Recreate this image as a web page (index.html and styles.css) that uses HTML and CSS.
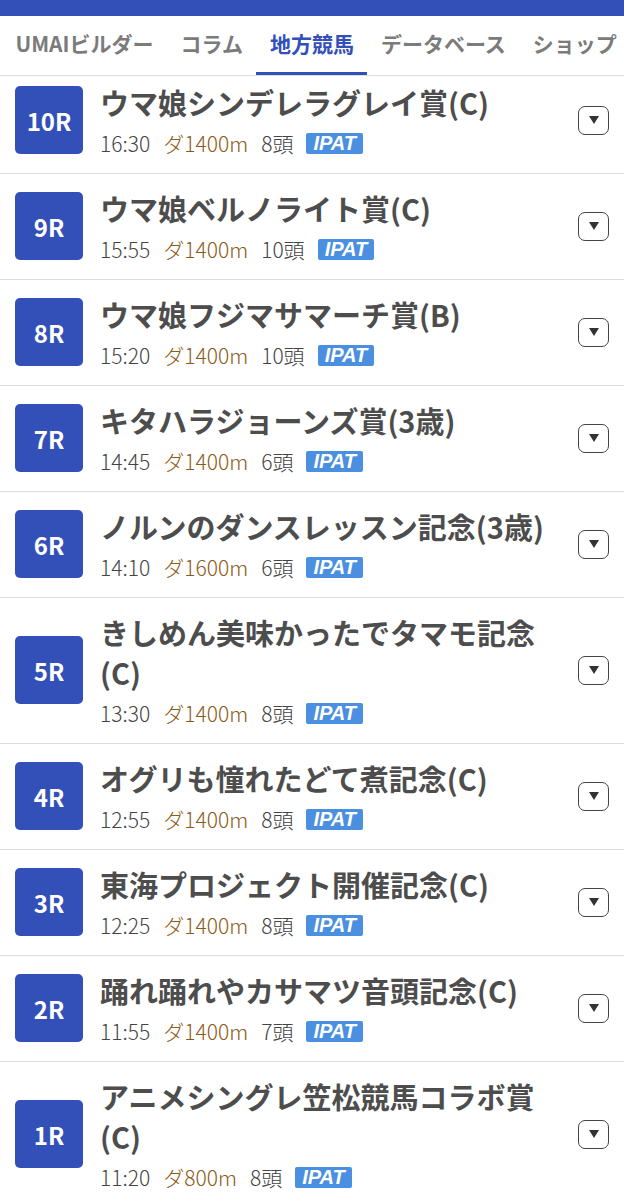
FILE: index.html
```html
<!DOCTYPE html>
<html lang="ja">
  <head>
    <meta charset="UTF-8" />
    <title>地方競馬</title>
    <link rel="stylesheet" href="styles.css">
  </head>
  <body>
    <!-- 上部の帯 -->
    <div class="topbar"></div>

    <!-- タブ -->
    <nav class="tabs">
      <a class="tab">UMAIビルダー</a>
      <a class="tab">コラム</a>
      <a class="tab active">地方競馬</a>
      <a class="tab">データベース</a>
      <a class="tab">ショップ</a>
    </nav>

    <!-- レース一覧（少しスクロールした状態） -->
    <div class="races">
      <ul class="race-list">
        <li class="race">
          <div class="race-no">10R</div>
          <div class="race-body">
            <div class="race-name">ウマ娘シンデレラグレイ賞(C)</div>
            <div class="race-meta"><span>16:30</span><span class="dist">ダ1400m</span><span>8頭</span><span class="ipat">IPAT</span></div>
          </div>
          <button class="toggle"><svg width="10" height="8" viewBox="0 0 10 8"><path d="M0 0h10L5 8z" fill="#333"/></svg></button>
        </li>
        <li class="race">
          <div class="race-no">9R</div>
          <div class="race-body">
            <div class="race-name">ウマ娘ベルノライト賞(C)</div>
            <div class="race-meta"><span>15:55</span><span class="dist">ダ1400m</span><span>10頭</span><span class="ipat">IPAT</span></div>
          </div>
          <button class="toggle"><svg width="10" height="8" viewBox="0 0 10 8"><path d="M0 0h10L5 8z" fill="#333"/></svg></button>
        </li>
        <li class="race">
          <div class="race-no">8R</div>
          <div class="race-body">
            <div class="race-name">ウマ娘フジマサマーチ賞(B)</div>
            <div class="race-meta"><span>15:20</span><span class="dist">ダ1400m</span><span>10頭</span><span class="ipat">IPAT</span></div>
          </div>
          <button class="toggle"><svg width="10" height="8" viewBox="0 0 10 8"><path d="M0 0h10L5 8z" fill="#333"/></svg></button>
        </li>
        <li class="race">
          <div class="race-no">7R</div>
          <div class="race-body">
            <div class="race-name">キタハラジョーンズ賞(3歳)</div>
            <div class="race-meta"><span>14:45</span><span class="dist">ダ1400m</span><span>6頭</span><span class="ipat">IPAT</span></div>
          </div>
          <button class="toggle"><svg width="10" height="8" viewBox="0 0 10 8"><path d="M0 0h10L5 8z" fill="#333"/></svg></button>
        </li>
        <li class="race">
          <div class="race-no">6R</div>
          <div class="race-body">
            <div class="race-name">ノルンのダンスレッスン記念(3歳)</div>
            <div class="race-meta"><span>14:10</span><span class="dist">ダ1600m</span><span>6頭</span><span class="ipat">IPAT</span></div>
          </div>
          <button class="toggle"><svg width="10" height="8" viewBox="0 0 10 8"><path d="M0 0h10L5 8z" fill="#333"/></svg></button>
        </li>
        <li class="race">
          <div class="race-no">5R</div>
          <div class="race-body">
            <div class="race-name">きしめん美味かったでタマモ記念(C)</div>
            <div class="race-meta"><span>13:30</span><span class="dist">ダ1400m</span><span>8頭</span><span class="ipat">IPAT</span></div>
          </div>
          <button class="toggle"><svg width="10" height="8" viewBox="0 0 10 8"><path d="M0 0h10L5 8z" fill="#333"/></svg></button>
        </li>
        <li class="race">
          <div class="race-no">4R</div>
          <div class="race-body">
            <div class="race-name">オグリも憧れたどて煮記念(C)</div>
            <div class="race-meta"><span>12:55</span><span class="dist">ダ1400m</span><span>8頭</span><span class="ipat">IPAT</span></div>
          </div>
          <button class="toggle"><svg width="10" height="8" viewBox="0 0 10 8"><path d="M0 0h10L5 8z" fill="#333"/></svg></button>
        </li>
        <li class="race">
          <div class="race-no">3R</div>
          <div class="race-body">
            <div class="race-name">東海プロジェクト開催記念(C)</div>
            <div class="race-meta"><span>12:25</span><span class="dist">ダ1400m</span><span>8頭</span><span class="ipat">IPAT</span></div>
          </div>
          <button class="toggle"><svg width="10" height="8" viewBox="0 0 10 8"><path d="M0 0h10L5 8z" fill="#333"/></svg></button>
        </li>
        <li class="race">
          <div class="race-no">2R</div>
          <div class="race-body">
            <div class="race-name">踊れ踊れやカサマツ音頭記念(C)</div>
            <div class="race-meta"><span>11:55</span><span class="dist">ダ1400m</span><span>7頭</span><span class="ipat">IPAT</span></div>
          </div>
          <button class="toggle"><svg width="10" height="8" viewBox="0 0 10 8"><path d="M0 0h10L5 8z" fill="#333"/></svg></button>
        </li>
        <li class="race">
          <div class="race-no">1R</div>
          <div class="race-body">
            <div class="race-name">アニメシングレ笠松競馬コラボ賞(C)</div>
            <div class="race-meta"><span>11:20</span><span class="dist">ダ800m</span><span>8頭</span><span class="ipat">IPAT</span></div>
          </div>
          <button class="toggle"><svg width="10" height="8" viewBox="0 0 10 8"><path d="M0 0h10L5 8z" fill="#333"/></svg></button>
        </li>
      </ul>
    </div>
  </body>
</html>
```

FILE: styles.css
```css
body {
  margin: 0;
  background: #fff;
  font-family: "Noto Sans CJK JP", "Noto Sans", sans-serif;
  color: #4d4d4d;
}

/* 上の青い帯 */
.topbar {
  height: 16px;
  background: #3350b8;
}

/* タブ */
.tabs {
  display: flex;
  height: 59px;
  padding-left: 2px;
  border-bottom: 1px solid #dcdcdc;
  white-space: nowrap;
  overflow: hidden;
}
.tab {
  display: flex;
  align-items: center;
  padding: 0 13.5px 3px;
  font-size: 21px;
  font-weight: bold;
  color: #7b7b7b;
  border-bottom: 3px solid transparent;
}
.tab.active {
  color: #3350b8;
  border-bottom-color: #3350b8;
}

/* レース一覧 */
.races {
  overflow: hidden;
}
.race-list {
  list-style: none;
  margin: -8px 0 0;
  padding: 0;
}
.race {
  display: flex;
  align-items: center;
  gap: 17px;
  padding: 14px 15px 15px;
  border-bottom: 1px solid #dcdcdc;
}
.race-no {
  flex: none;
  width: 68px;
  height: 68px;
  border-radius: 5px;
  background: #3350b8;
  color: #fff;
  font-size: 24px;
  font-weight: bold;
  display: flex;
  align-items: center;
  justify-content: center;
}
.race-body {
  flex: 1;
  min-width: 0;
}
.race-name {
  font-size: 29px;
  line-height: 40px;
  font-weight: bold;
  color: #4d4d4d;
}
.race-meta {
  display: flex;
  align-items: center;
  gap: 13px;
  margin-top: 6px;
  height: 30px;
  font-size: 21px;
  font-weight: 300;
  color: #444;
}
.dist {
  color: #8b5a16;
}
.ipat {
  background: #4a8fe0;
  color: #fff;
  font-family: "Liberation Sans", Arial, sans-serif;
  font-style: italic;
  font-weight: bold;
  font-size: 20px;
  line-height: 21px;
  padding: 0 7px;
  border-radius: 2px;
}

/* 開閉ボタン */
.toggle {
  flex: none;
  width: 31px;
  height: 29px;
  padding: 0;
  border: 1.5px solid #444;
  border-radius: 7px;
  background: #fff;
  display: flex;
  align-items: center;
  justify-content: center;
}
```
